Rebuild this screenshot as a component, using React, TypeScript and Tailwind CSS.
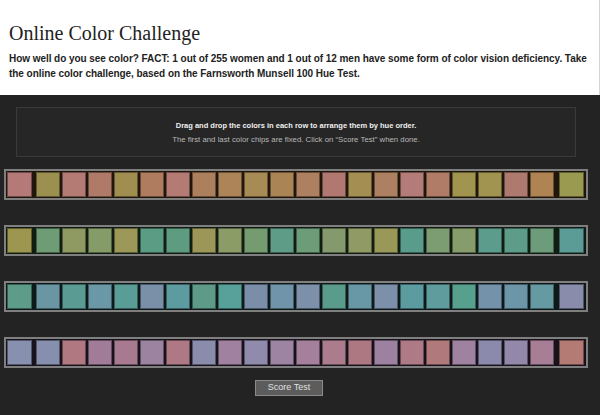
const rows: { bg: string; chips: string[] }[] = [
  {
    bg: "bg-[#21160c]",
    chips: [
      "#b57a78", "#9c9050", "#b47a74", "#b07a68", "#a08e50", "#b07c60", "#b47a74", "#ac805c",
      "#ac8458", "#a88a54", "#aa8454", "#ac8060", "#b07870", "#a48e52", "#ac8060", "#b47c78",
      "#b07c68", "#a0944e", "#a09450", "#ae7a70", "#b08452", "#9a9a50",
    ],
  },
  {
    bg: "bg-[#111c12]",
    chips: [
      "#9c964e", "#6e9c74", "#8e9a62", "#869c68", "#9c9858", "#5a9c84", "#5e9c80", "#9c9658",
      "#8c9c66", "#749c70", "#5e9c88", "#6c9c78", "#849a6c", "#909a64", "#9a9858", "#5a9c8c",
      "#7c9c72", "#869c6a", "#5c9c8c", "#5c9c88", "#6c9c7a", "#5c9c96",
    ],
  },
  {
    bg: "bg-[#0e1a1a]",
    chips: [
      "#5c9c88", "#6a96a4", "#5a9c94", "#6a98a6", "#5a9c96", "#7a90a8", "#5c9ca0", "#5e9a88",
      "#58a09a", "#7a8eaa", "#7094aa", "#7c90aa", "#5a9c8c", "#6898a6", "#7c90aa", "#5c9ca0",
      "#5e9c9e", "#58a08e", "#7492aa", "#6c96a8", "#669aa2", "#8a8cac",
    ],
  },
  {
    bg: "bg-[#17121c]",
    chips: [
      "#8890b0", "#8690ae", "#b07880", "#a07c98", "#a87a90", "#9c84a0", "#ae7884", "#8a8cac",
      "#a082a0", "#908aac", "#9c84a2", "#a4809c", "#aa7c8c", "#ae7882", "#9c82a0", "#ae7a86",
      "#b07a7c", "#9e82a0", "#8c8aac", "#9488aa", "#a87e96", "#b47a74",
    ],
  },
];

function ChipRow({ bg, chips }: { bg: string; chips: string[] }) {
  const first = chips[0];
  const last = chips[chips.length - 1];
  const middle = chips.slice(1, -1);
  return (
    <div className={`ml-[4px] flex w-[584px] items-center border-2 border-[#7f7f7f] px-[1px] py-[1px] ${bg}`}>
      <div className="h-[25px] w-[25px] border border-black/40" style={{ backgroundColor: first }} />
      <div className="ml-[4px] flex gap-[2px]">
        {middle.map((c, i) => (
          <div key={i} className="h-[25px] w-[24px] border border-black/40" style={{ backgroundColor: c }} />
        ))}
      </div>
      <div className="ml-[5px] h-[25px] w-[25px] border border-black/40" style={{ backgroundColor: last }} />
    </div>
  );
}

export default function App() {
  return (
    <div className="h-[415px] w-[600px] overflow-hidden bg-white font-['Liberation_Sans',Arial,sans-serif]">
      <div className="h-[95px] border-r border-[#d4d4d4] pl-[9px] pr-[6px] pt-[21px]">
        <h1 className="font-['Liberation_Serif',serif] text-[20px] leading-[24px] text-[#222]">
          Online Color Challenge
        </h1>
        <p className="mt-[6px] text-[10px] font-bold leading-[15px] tracking-[-0.05px] text-[#222]">
          How well do you see color? FACT: 1 out of 255 women and 1 out of 12 men have some form of color vision
          deficiency. Take the online color challenge, based on the Farnsworth Munsell 100 Hue Test.
        </p>
      </div>

      <div className="h-[320px] bg-[#232323] pt-[12px]">
        <div className="ml-[16px] h-[50px] w-[560px] border border-[#3a3a3a] bg-[#262626] pt-[11px] text-center">
          <p className="text-[7.5px] font-bold leading-[14px] text-[#f0f0f0]">
            Drag and drop the colors in each row to arrange them by hue order.
          </p>
          <p className="text-[7.8px] leading-[14px] text-[#b8b8b8]">
            The first and last color chips are fixed. Click on “Score Test” when done.
          </p>
        </div>

        <div className="mt-[12px] flex flex-col gap-[25px]">
          {rows.map((r, i) => (
            <ChipRow key={i} bg={r.bg} chips={r.chips} />
          ))}
        </div>

        <button className="ml-[255px] mt-[12px] flex h-[16px] w-[68px] items-center justify-center border border-[#8a8a8a] bg-[#5c5c5c] text-[9px] text-[#e0e0e0]">
          Score Test
        </button>
      </div>
    </div>
  );
}
